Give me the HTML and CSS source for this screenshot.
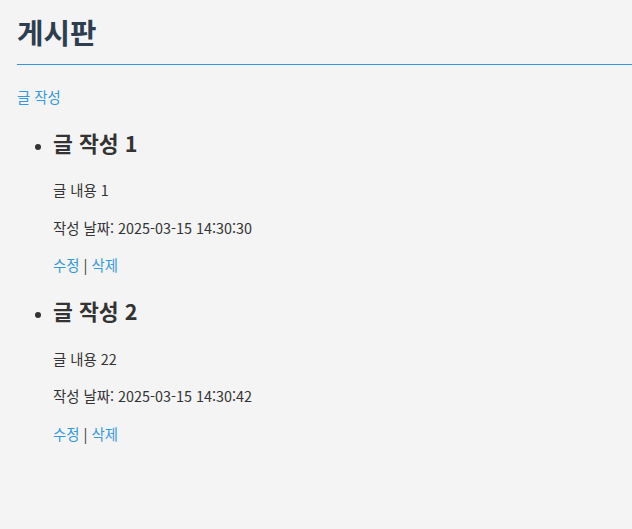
FILE: index.html
```html
<!DOCTYPE html>
<html lang="ko">
<head>
<meta charset="utf-8">
<title>게시판</title>
<link rel="stylesheet" href="styles.css">
</head>
<body>
<h1 class="title">게시판</h1>
<a class="link" href="#">글 작성</a>
<ul class="posts">
  <li class="post">
    <h2 class="post-title">글 작성 1</h2>
    <p class="post-text">글 내용 1</p>
    <p class="post-text">작성 날짜: 2025-03-15 14:30:30</p>
    <p class="post-text"><a class="link" href="#">수정</a> | <a class="link" href="#">삭제</a></p>
  </li>
  <li class="post">
    <h2 class="post-title">글 작성 2</h2>
    <p class="post-text">글 내용 22</p>
    <p class="post-text">작성 날짜: 2025-03-15 14:30:42</p>
    <p class="post-text"><a class="link" href="#">수정</a> | <a class="link" href="#">삭제</a></p>
  </li>
</ul>
</body>
</html>
```
FILE: styles.css
```css
html, body {
  background: #f4f4f4;
}
body {
  margin: 0;
  padding: 9px 0 20px 17px;
  font-family: "Noto Sans CJK KR", "Noto Sans", sans-serif;
  font-size: 14.4px;
  line-height: 1.6;
  color: #333;
}
.title {
  margin: 0 0 20px;
  padding-bottom: 9px;
  font-size: 28.8px;
  line-height: 46px;
  font-weight: 700;
  color: #2c3e50;
  border-bottom: 1px solid #3498db;
}
.link {
  color: #3498db;
  text-decoration: none;
}
.posts {
  margin: 1em 0;
  padding-left: 36px;
}
.post-title {
  margin: 0.83em 0;
  font-size: 1.5em;
  font-weight: 700;
  color: #333;
}
.post-text {
  margin: 1em 0;
}
```
